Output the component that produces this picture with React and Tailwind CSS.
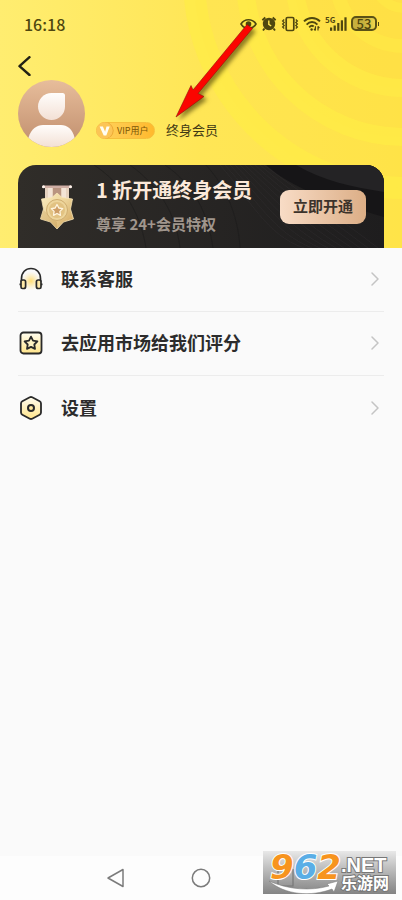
import { ChevronRight } from 'lucide-react';

function StatusIcons() {
  return (
    <div className="flex items-center gap-1 text-[#4f470f]">
      {/* eye */}
      <svg className="h-4 w-[17px]" viewBox="0 0 17 16" fill="none" stroke="currentColor" strokeWidth="1.6">
        <path d="M1 8C4.500 2.300 12.500 2.300 16 8C12.500 13.700 4.500 13.700 1 8Z" />
        <circle cx="8.500" cy="8" r="2.800" fill="currentColor" stroke="none" />
      </svg>
      {/* alarm */}
      <svg className="h-4 w-4" viewBox="0 0 16 16" fill="none">
        <circle cx="8" cy="8" r="6.200" fill="currentColor" />
        <path d="M1.400 4.300L4.300 1.500M14.600 4.300L11.700 1.500M3.500 12.500L2 14.500M12.500 12.500L14 14.500" stroke="currentColor" strokeWidth="1.900" />
        <path d="M7.800 4.500V8.300L10.200 10" stroke="#ffe751" strokeWidth="1.400" />
      </svg>
      {/* vibrate */}
      <svg className="h-4 w-[18px]" viewBox="0 0 18 16" fill="none" stroke="currentColor">
        <rect x="5.200" y="1.500" width="7.600" height="13" rx="1.400" strokeWidth="1.700" />
        <path d="M3.200 3.500L1.600 5L3.200 6.500L1.600 8L3.200 9.500L1.600 11L3.200 12.500M14.800 3.500L16.400 5L14.800 6.500L16.400 8L14.800 9.500L16.400 11L14.800 12.500" strokeWidth="1.200" />
      </svg>
      {/* wifi */}
      <svg className="h-4 w-[18px]" viewBox="0 0 18 16" fill="none" stroke="currentColor" strokeWidth="1.900">
        <path d="M1 5.300C5.500 0.800 12.500 0.800 17 5.300" />
        <path d="M3.600 8.600C6.800 5.200 11.200 5.200 14.400 8.600" />
        <path d="M6.200 11.300C7.800 9.500 9.500 9.500 10.700 10.500" />
        <circle cx="8.600" cy="13.500" r="1.200" fill="currentColor" stroke="none" />
        <path d="M12.400 14.500V10.300M11 12.800L12.400 14.500M15 10.300V14.500M16.400 12L15 10.300" strokeWidth="1.200" />
      </svg>
      {/* signal */}
      <div className="relative h-4 w-[22px]">
        <span className="absolute top-0 left-0 text-[8px] leading-[8px] font-bold">5G</span>
        <svg className="h-4 w-[22px]" viewBox="0 0 22 16" fill="currentColor">
          <rect x="5" y="11.500" width="2.200" height="3.300" />
          <rect x="8.600" y="9.500" width="2.200" height="5.300" />
          <rect x="12.200" y="7" width="2.200" height="7.800" />
          <rect x="15.800" y="4.300" width="2.200" height="10.500" />
          <rect x="19.400" y="1.300" width="2.200" height="13.500" />
        </svg>
      </div>
      {/* battery */}
      <div className="flex items-center">
        <div className="flex h-[15px] w-[26px] items-center justify-center rounded-[5px] border-2 border-[#5b5216] bg-linear-to-r from-[#c6b03d] from-50% to-[#eed74c] text-[13px] leading-3 font-medium">
          53
        </div>
        <span className="ml-px h-1 w-px bg-[#4f470f]" />
      </div>
    </div>
  );
}

function Rings() {
  return (
    <svg className="absolute top-0 right-0 h-[248px] w-[402px]" viewBox="0 0 402 248" fill="none" stroke="#ffec46">
      <circle cx="404" cy="-22" r="210" fill="#ffe247" fillOpacity="0.200" strokeWidth="22" strokeOpacity="0.700" />
      <circle cx="404" cy="-22" r="159" fill="#ffdf43" fillOpacity="0.250" strokeWidth="18" strokeOpacity="0.700" />
      <circle cx="404" cy="-22" r="110" fill="#ffdc42" fillOpacity="0.200" strokeWidth="18" strokeOpacity="0.600" />
      <circle cx="404" cy="-22" r="68" strokeWidth="14" strokeOpacity="0.500" />
      <circle cx="404" cy="-22" r="30" strokeWidth="10" strokeOpacity="0.500" />
    </svg>
  );
}

function Avatar() {
  return (
    <svg className="h-[67px] w-[67px] shrink-0" viewBox="0 0 67 67">
      <defs>
        <linearGradient id="skin" x1="0" y1="0" x2="0" y2="1">
          <stop offset="0" stopColor="#e7bd9b" />
          <stop offset="1" stopColor="#c08e6d" />
        </linearGradient>
        <linearGradient id="body" x1="0" y1="0" x2="0" y2="1">
          <stop offset="0" stopColor="#fffdfb" />
          <stop offset="1" stopColor="#f3e0d5" />
        </linearGradient>
        <clipPath id="face">
          <circle cx="33.500" cy="33.500" r="33.500" />
        </clipPath>
      </defs>
      <g clipPath="url(#face)">
        <rect width="67" height="67" fill="url(#skin)" />
        <path d="M33.500 13H44.500Q47 13 47 15.500V26.500A13.500 13.500 0 1 1 33.500 13Z" fill="url(#body)" />
        <path d="M10.500 57.500C13 49 19 45 25 45H43C49 45 54.500 49 56.500 57.500V67H10.500Z" fill="url(#body)" />
      </g>
    </svg>
  );
}

function VipBadge() {
  return (
    <div className="flex h-[17px] w-[59px] items-center rounded-full border border-[#f6bf3c] bg-linear-to-r from-[#ffd35c] to-[#ffb92c]">
      <svg className="-ml-px h-[17px] w-[18px]" viewBox="0 0 18 17">
        <circle cx="9.500" cy="8.500" r="8.200" fill="#eda936" />
        <circle cx="8.500" cy="8.500" r="8.200" fill="#fcc556" />
        <path d="M3.600 4.500H6.900L9.100 9.700L10.500 4.500H13.700L10.300 13.500H7.700Z" fill="#fffdf3" />
      </svg>
      <span className="ml-[3px] text-[9px] leading-none whitespace-nowrap text-[#7d5608]">VIP用户</span>
    </div>
  );
}

function Medal() {
  return (
    <svg className="h-[48px] w-[36px] shrink-0" viewBox="0 0 36 48">
      <defs>
        <linearGradient id="gold" x1="0" y1="0" x2="1" y2="1">
          <stop offset="0" stopColor="#fbeec4" />
          <stop offset="0.500" stopColor="#ecd297" />
          <stop offset="1" stopColor="#cfa259" />
        </linearGradient>
      </defs>
      <path d="M6 4H30V18H6Z" fill="#e6d2bf" />
      <path d="M9 4H13V18H9ZM23 4H27V18H23Z" fill="#f3e4d6" />
      <path d="M14 4H22V14H14Z" fill="#b99480" />
      <path d="M18 10L23 14.500L33.500 16L31.500 26L34.500 36L24.500 39L18 46L11.500 39L1.500 36L4.500 26L2.500 16L13 14.500Z" fill="url(#gold)" stroke="#f7e5b8" strokeWidth="0.800" strokeLinejoin="round" />
      <path d="M18 39V46L11.500 39L1.500 36L4.500 27Z" fill="#b98b45" fillOpacity="0.250" />
      <circle cx="18" cy="27" r="10.500" fill="#edd59b" stroke="#cfad70" strokeWidth="1" />
      <circle cx="18" cy="27" r="8" fill="#e2c282" />
      <path d="M18 21.500L19.800 25L23.700 25.600L20.900 28.400L21.500 32.300L18 30.500L14.500 32.300L15.100 28.400L12.300 25.600L16.200 25Z" fill="#cf9f67" stroke="#fff5df" strokeWidth="1.300" strokeLinejoin="round" />
      <rect x="3.500" y="2.500" width="29" height="2.600" rx="1.200" fill="#cfaea4" />
      <circle cx="4.500" cy="3.700" r="1.500" fill="#fff3ec" />
      <circle cx="31.500" cy="3.700" r="1.500" fill="#fff3ec" />
    </svg>
  );
}

function MemberCard() {
  return (
    <section className="relative mx-[18px] mt-[18px] flex h-[83px] items-center overflow-hidden rounded-t-[18px] bg-linear-to-r from-[#302d29] to-[#1e1d1e] pr-[18px] pl-[21px]">
      <svg className="absolute inset-0 h-full w-full" viewBox="0 0 366 83" preserveAspectRatio="none" fill="none">
        <path d="M248 0C275 24 310 35 366 52V0Z" fill="#161517" />
        <path d="M278 0C305 16 335 22 366 27V0Z" fill="#242325" />
        <g stroke="#1a191a" strokeOpacity="0.500">
          <path d="M76 0C103 18 122 45 128 83" />
          <path d="M112 0C140 20 158 48 162 83" />
          <path d="M147 0C176 20 190 48 195 83" />
          <path d="M188 0C208 22 220 50 222 83" />
        </g>
        <g stroke="#4a4849" strokeOpacity="0.250" strokeWidth="0.700">
          <path d="M222 0C252 30 280 62 318 83" />
          <path d="M227 0C257 29 288 60 326 83" />
          <path d="M232 0C262 28 296 58 334 83" />
          <path d="M237 0C267 27 304 56 342 83" />
          <path d="M242 0C272 26 312 54 350 83" />
          <path d="M217 0C247 31 272 64 310 83" />
          <path d="M212 0C242 32 264 66 302 83" />
          <path d="M207 0C237 33 256 68 294 83" />
          <path d="M202 0C232 34 248 70 286 83" />
          <path d="M246 0C280 26 320 52 360 83" />
        </g>
      </svg>
      <Medal />
      <div className="relative ml-[21px] flex-1 pb-0.5 whitespace-nowrap">
        <h2 className="text-[20px] leading-7 font-bold text-[#fbe9da]">1 折开通终身会员</h2>
        <p className="mt-2 text-[15px] leading-6 font-bold text-[#a0968d]">尊享 24+会员特权</p>
      </div>
      <button className="relative h-[34px] w-[86px] shrink-0 rounded-[9px] bg-linear-to-r from-[#f8dcc6] to-[#dcae86] text-[15px] font-bold text-[#3c332b]">
        立即开通
      </button>
    </section>
  );
}

function IconGlow() {
  return (
    <defs>
      <linearGradient id="glow" x1="0" y1="0" x2="0" y2="1">
        <stop offset="0" stopColor="#fffdf0" />
        <stop offset="1" stopColor="#ffe48a" />
      </linearGradient>
      <radialGradient id="spot">
        <stop offset="0" stopColor="#ffdc72" />
        <stop offset="1" stopColor="#ffe9a6" stopOpacity="0" />
      </radialGradient>
    </defs>
  );
}

function HeadsetIcon() {
  return (
    <svg className="h-6 w-6" viewBox="0 0 24 24" fill="none" stroke="#292929" strokeWidth="1.700">
      <IconGlow />
      <circle cx="12" cy="14" r="9.500" fill="url(#spot)" stroke="none" />
      <path d="M2.500 15V11.500C2.500 5.500 6.500 1.500 12 1.500S21.500 5.500 21.500 11.500V15" />
      <path d="M2 14.500C2 13.500 2.800 13 3.800 13H4.800C6 13 6.600 13.600 6.600 14.700V19.500C6.600 20.700 6 21.500 4.800 21.500H3.500C2.500 21.500 2 21 2 20Z" fill="#ffe9a6" />
      <path d="M22 14.500C22 13.500 21.200 13 20.200 13H19.200C18 13 17.400 13.600 17.400 14.700V19.500C17.400 20.700 18 21.500 19.200 21.500H20.500C21.500 21.500 22 21 22 20Z" fill="#ffe9a6" />
      <path d="M0.500 17.300H2M22 17.300H23.500" />
    </svg>
  );
}

function RateIcon() {
  return (
    <svg className="h-6 w-6" viewBox="0 0 24 24" stroke="#292929" strokeWidth="1.800" strokeLinejoin="round">
      <rect x="1.500" y="1.500" width="21" height="21" rx="3" fill="url(#glow)" />
      <path d="M12 5.600L14 9.600L18.400 10.300L15.300 13.500L16 17.900L12 15.900L8 17.900L8.700 13.500L5.600 10.300L10 9.600Z" fill="#fff3c4" />
    </svg>
  );
}

function SettingsIcon() {
  return (
    <svg className="h-6 w-6" viewBox="0 0 24 24" stroke="#292929" strokeWidth="1.800" strokeLinejoin="round">
      <path d="M10.800 1.300Q12 0.700 13.200 1.300L20.700 5.300Q22 6 22 7.400V16.600Q22 18 20.700 18.700L13.200 22.700Q12 23.300 10.800 22.700L3.300 18.700Q2 18 2 16.600V7.400Q2 6 3.300 5.300Z" fill="url(#glow)" />
      <circle cx="12" cy="12" r="3" fill="#ffe9a0" strokeWidth="2" />
    </svg>
  );
}

const MENU = [
  { label: '联系客服', Icon: HeadsetIcon },
  { label: '去应用市场给我们评分', Icon: RateIcon },
  { label: '设置', Icon: SettingsIcon },
];

function Arrow() {
  return (
    <svg className="pointer-events-none absolute top-[20px] left-[172px] h-[104px] w-[88px] drop-shadow-[3px_3px_2px_rgba(60,50,0,0.6)]" viewBox="172 20 88 104">
      <path d="M247 24.500L252.500 28.500L198 93.500L204 96.500L176 117L191 85.500L193 90Z" fill="#fb0500" stroke="#8e1208" strokeWidth="0.600" />
    </svg>
  );
}

function Watermark() {
  return (
    <div className="absolute right-[6px] bottom-[6px] flex h-[43px] w-[133px] bg-linear-to-b from-[#e8e8e8] to-[#848484] pl-[7px] whitespace-nowrap">
      <svg className="absolute inset-0 h-full w-full" viewBox="0 0 133 43">
        <path d="M15 18V35H30V18" fill="none" stroke="#777" strokeWidth="1.200" />
        <path d="M6 30C22 44 48 46 69 38L71 41L75 30L64 33L66 35C48 40 26 39 6 30Z" fill="#fff" stroke="#777" strokeWidth="0.500" />
      </svg>
      <div className="relative w-[71px] font-['DejaVu_Sans'] text-[34px] leading-[32px] font-bold italic [paint-order:stroke] [-webkit-text-stroke:2px_#fff]">
        <span className="text-[#f7941e]">9</span>
        <span className="text-[#5aaee6]">6</span>
        <span className="text-[#f7941e]">2</span>
      </div>
      <div className="relative pt-[4px] font-['Liberation_Sans','Noto_Sans_CJK_SC',sans-serif] font-bold text-white [paint-order:stroke] [-webkit-text-stroke:2px_#777]">
        <div className="text-[20px] leading-5">.NET</div>
        <div className="text-[16px] leading-[18px]">乐游网</div>
      </div>
    </div>
  );
}

export default function App() {
  return (
    <div className="relative flex min-h-screen flex-col bg-[#fafafa] font-['Noto_Sans_CJK_SC','Noto_Sans',sans-serif]">
      <header className="relative overflow-hidden bg-linear-to-r from-[#ffed70] via-[#ffe656] to-[#ffe448]">
        <Rings />
        <div className="relative flex h-[47px] items-center justify-between pr-[23px] pl-6">
          <span className="text-[16px] leading-6 font-medium text-[#4f470f]">16:18</span>
          <StatusIcons />
        </div>
        <button className="relative ml-4 flex h-[33px] w-6 items-start pt-[9px]" aria-label="返回">
          <svg className="h-5 w-4" viewBox="0 0 16 20" fill="none" stroke="#222114" strokeWidth="2.400" strokeLinecap="round" strokeLinejoin="round">
            <path d="M13.500 1.200L3.500 10.200L13.500 19" />
          </svg>
        </button>
        <div className="relative flex items-end px-[18px]">
          <Avatar />
          <div className="mb-2 ml-[11px] flex items-center gap-[11px]">
            <VipBadge />
            <span className="text-[13px] leading-[18px] text-[#3f3914]">终身会员</span>
          </div>
        </div>
        <MemberCard />
      </header>

      <nav className="flex flex-1 flex-col px-[18px]">
        {MENU.map(({ label, Icon }) => (
          <button key={label} className="flex h-16 shrink-0 items-center border-b border-[#ececec] pb-px pl-px text-left last:border-b-0">
            <Icon />
            <span className="ml-[18px] flex-1 pb-0.5 text-[18px] leading-7 font-bold text-[#2c2c2c]">{label}</span>
            <ChevronRight className="-mr-[3px] h-6 w-6 text-[#c4c4c4]" strokeWidth={1.5} />
          </button>
        ))}
      </nav>

      <footer className="relative flex h-11 items-center bg-[#fdfdfd]">
        <div className="flex flex-1 items-center justify-around px-[73px] text-[#7b7b7b]">
          <button aria-label="返回">
            <svg className="h-5 w-5" viewBox="0 0 20 20" fill="none" stroke="currentColor" strokeWidth="1.500" strokeLinejoin="round">
              <path d="M17 1.500V18.500L2 10Z" />
            </svg>
          </button>
          <button aria-label="主页">
            <svg className="h-5 w-5" viewBox="0 0 20 20" fill="none" stroke="currentColor" strokeWidth="1.500">
              <circle cx="10" cy="10" r="8.700" />
            </svg>
          </button>
          <button aria-label="最近任务">
            <svg className="h-5 w-5" viewBox="0 0 20 20" fill="none" stroke="currentColor" strokeWidth="1.500">
              <rect x="2" y="2" width="16" height="16" />
            </svg>
          </button>
        </div>
        <Watermark />
      </footer>
      <Arrow />
    </div>
  );
}
